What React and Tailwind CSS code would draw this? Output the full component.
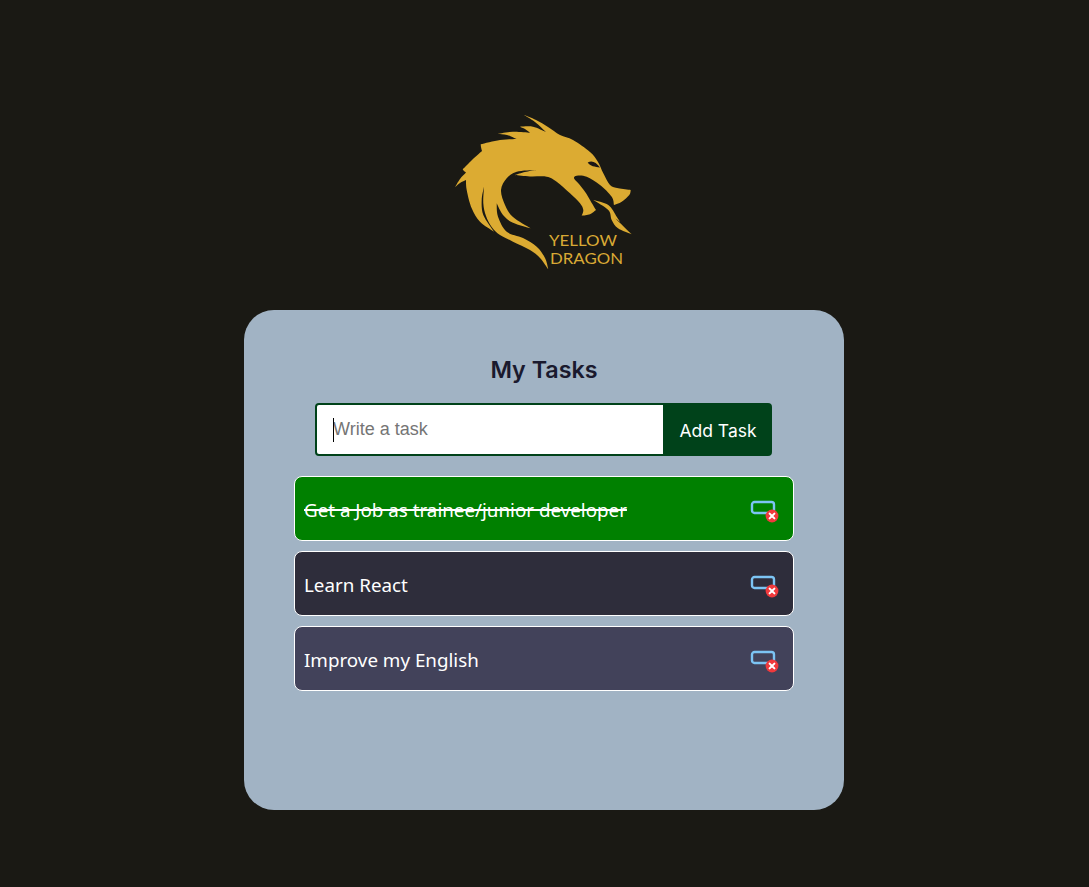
import React from "react";

// Catmull-Rom smoothing inside each run of points; runs meet at sharp corners.
function toPath(runs) {
  let d = `M${runs[0][0][0]} ${runs[0][0][1]}`;
  for (const r of runs) {
    for (let i = 0; i < r.length - 1; i++) {
      const p0 = r[i - 1] || r[i];
      const p1 = r[i];
      const p2 = r[i + 1];
      const p3 = r[i + 2] || p2;
      const c1x = p1[0] + (p2[0] - p0[0]) / 6;
      const c1y = p1[1] + (p2[1] - p0[1]) / 6;
      const c2x = p2[0] - (p3[0] - p1[0]) / 6;
      const c2y = p2[1] - (p3[1] - p1[1]) / 6;
      d += ` C${c1x.toFixed(1)} ${c1y.toFixed(1)} ${c2x.toFixed(1)} ${c2y.toFixed(1)} ${p2[0]} ${p2[1]}`;
    }
  }
  return d + " Z";
}

const body = [
  [[522.7, 114.3], [536, 120], [548, 127], [560, 135], [573, 140], [590, 152], [598, 162], [603.3, 173.3], [610, 185], [618.3, 188.3], [630.7, 190]],
  [[630.7, 190], [629.3, 195], [621.7, 201.7], [614, 205]],
  [[614, 205], [611.7, 196.7], [600, 185], [586.7, 176.7], [576.7, 175.7], [574, 178.3], [578.3, 183.3], [585, 191.7], [590, 200], [596, 210]],
  [[596, 210], [590, 214.3], [581.7, 215.7]],
  [[581.7, 215.7], [583.3, 210], [580, 203.3], [570, 193.3], [556.7, 181.7], [546.7, 176.7], [530, 176.5], [515, 175]],
  [[515, 175], [525, 172], [536, 170]],
  [[536, 170], [516.7, 171.7], [506.7, 178.3], [501, 190], [505, 205], [513, 217], [530.7, 228.3]],
  [[530.7, 228.3], [513, 222.7], [503, 215], [496.7, 203.3]],
  [[496.7, 203.3], [498, 216.7], [506.7, 231.7], [523, 238], [536.7, 246.7], [545, 258], [548.3, 269.3]],
  [[548.3, 269.3], [540, 258], [530, 250], [513, 241.7], [500, 235], [491.7, 227], [486, 216], [483.3, 203.3], [484, 186.7]],
  [[484, 186.7], [481.7, 200], [483.3, 215], [494, 231.7]],
  [[494, 231.7], [480, 221.7], [471.7, 208.3], [466.7, 190], [466, 180]],
  [[466, 180], [460, 183], [455, 187.3]],
  [[455, 187.3], [460, 179], [466, 172.5]],
  [[466, 172.5], [464, 171], [462.7, 169.3]],
  [[462.7, 169.3], [472, 160], [482, 151]],
  [[482, 151], [481, 147], [480.7, 144.3]],
  [[480.7, 144.3], [500, 140], [516.7, 139]],
  [[516.7, 139], [507, 135], [497.7, 134]],
  [[497.7, 134], [513, 131.7], [530, 132.7]],
  [[530, 132.7], [525, 129], [520, 126.7]],
  [[520, 126.7], [533, 126.7], [546, 132]],
  [[546, 132], [535, 122], [522.7, 114.3]],
];

const flame = [
  [[593.3, 200], [608.3, 205], [616.7, 216.7], [620, 222]],
  [[620, 222], [616, 219], [631.7, 234.3]],
  [[631.7, 234.3], [618, 228.3], [611.7, 220], [608.3, 210], [593.3, 200]],
];

function Logo() {
  return (
    <svg width="210" height="180" viewBox="439 100 210 180" className="block">
      <defs>
        <filter id="soft" x="-5%" y="-5%" width="110%" height="110%">
          <feGaussianBlur stdDeviation="0.55" />
        </filter>
      </defs>
      <g filter="url(#soft)">
        <path fill="#dcab33" d={toPath(body)} />
        <path fill="#dcab33" d={toPath(flame)} />
        <path fill="#1a1914" d="M587.7 162.5 C592 160 596 162 600 167.5 C595 167 590 166 587.7 162.5 Z" />
      </g>
      <g fill="#d9a935" fontFamily="'Lato', sans-serif" fontSize="16">
        <text x="549" y="246" textLength="68" lengthAdjust="spacingAndGlyphs">YELLOW</text>
        <text x="550" y="264" textLength="73" lengthAdjust="spacingAndGlyphs">DRAGON</text>
      </g>
    </svg>
  );
}

function DeleteIcon() {
  return (
    <svg width="30" height="26" viewBox="0 0 30 26" className="mt-[8px] block shrink-0">
      <rect x="2" y="2" width="22" height="11" rx="2.5" fill="none" stroke="#7cc4f4" strokeWidth="2.4" />
      <circle cx="22" cy="16" r="6.4" fill="#f0393c" />
      <path d="M19.6 13.6 L24.4 18.4 M24.4 13.6 L19.6 18.4" stroke="#fff" strokeWidth="2" strokeLinecap="round" />
    </svg>
  );
}

function Task({ text, bg, done }) {
  return (
    <div className={`flex h-[65px] items-center justify-between rounded-lg border border-white pl-[9px] pr-[13px] ${bg}`}>
      <span className={`mt-[3px] font-['Noto_Sans','Open_Sans',sans-serif] text-[18.8px] leading-[26px] text-white ${done ? "line-through decoration-2" : ""}`}>
        {text}
      </span>
      <DeleteIcon />
    </div>
  );
}

export default function App() {
  return (
    <div className="flex min-h-[887px] flex-col items-center bg-[#1a1914] pr-px pt-[100px] font-['Liberation_Sans',sans-serif]">
      <div className="mb-[30px]">
        <Logo />
      </div>
      <div className="flex h-[500px] w-[600px] flex-col items-center rounded-[30px] bg-[#a1b3c4] px-[50px] pt-[43px]">
        <h1 className="mt-px font-['Inter',sans-serif] text-[23.3px] leading-[32px] font-semibold text-[#1a1a2e]">My Tasks</h1>
        <form className="relative mr-px mt-[17px] flex h-[53px] w-[457px] overflow-hidden rounded-[4px] border-2 border-[#00421a] bg-[#00421a]">
          <input
            readOnly
            placeholder="Write a task"
            className="h-full w-[346px] bg-white pl-4 text-[18px] text-[#333] outline-none placeholder:text-[#757575]"
          />
          <span className="absolute left-[16px] top-[13px] h-[24px] w-px bg-black" />
          <button type="button" className="flex-1 pl-[3px] pt-[3px] font-['Inter',sans-serif] text-[17.5px] text-white">
            Add Task
          </button>
        </form>
        <div className="mt-[20px] flex w-[500px] flex-col gap-[10px]">
          <Task text="Get a Job as trainee/junior developer" bg="bg-[#008000]" done />
          <Task text="Learn React" bg="bg-[#2e2d3b]" />
          <Task text="Improve my English" bg="bg-[#42425a]" />
        </div>
      </div>
    </div>
  );
}
